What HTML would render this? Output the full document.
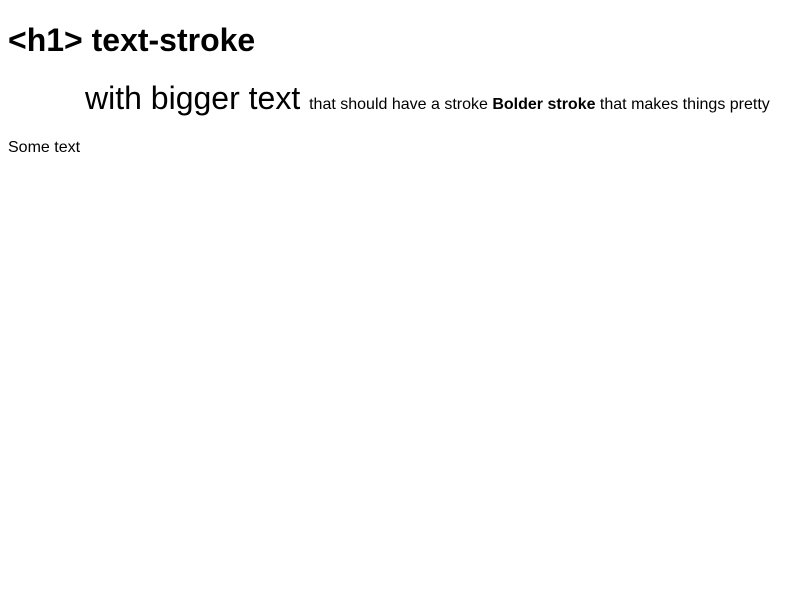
<!DOCTYPE html>
<html><head><style>
body{margin:8px;font-family:"Liberation Sans",sans-serif;color:#000;background:#fff;}
h1{font-size:32px;margin:22px 0 21px;line-height:37px;}
p.a{margin:21px 0 0 0;text-indent:77px;font-size:16px;line-height:37px;}
p.a .big{font-size:32px;}
p.b{margin:16px 0;font-size:16px;line-height:18px;}
</style></head><body>
<h1>&lt;h1&gt; text-stroke</h1>
<p class="a"><span class="big">with bigger text </span>that should have a stroke <b>Bolder stroke</b> that makes things pretty</p>
<p class="b">Some text</p>
</body></html>
